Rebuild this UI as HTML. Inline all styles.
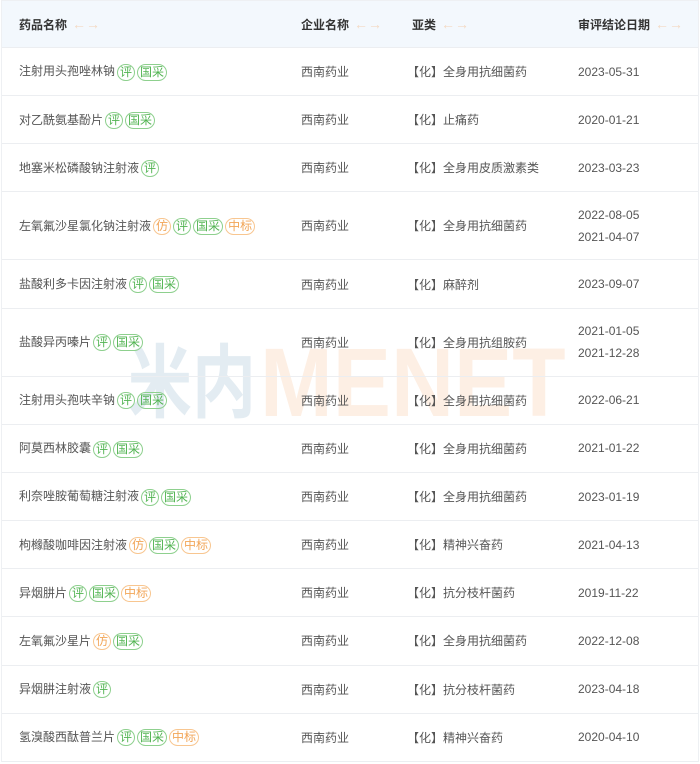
<!DOCTYPE html>
<html><head><meta charset="utf-8"><style>
*{margin:0;padding:0;box-sizing:border-box}
body{width:700px;height:764px;background:#fff;font-family:"Liberation Sans","Noto Sans CJK SC",sans-serif;font-size:12px;color:#555;position:relative;overflow:hidden}
.wrap{position:absolute;left:1px;top:0;width:698px;border:1px solid #eef0f3;border-bottom:none;z-index:1}
.row{display:flex;align-items:center;border-bottom:1px solid #eceef1;height:48.17px;position:relative}
.row.h2{height:68px}
.hd{background:#f3f8fd;height:47px;font-weight:bold;color:#333}
.c1{position:absolute;left:17px}
.c2{position:absolute;left:299px}
.c3{position:absolute;left:405px}
.c4{position:absolute;left:576px;line-height:22px}
.ar{color:#f3dac4;font-weight:normal;margin-left:5px;font-size:14px}
.t{display:inline-block;border:1px solid #8ed08e;color:#52b452;border-radius:9px;font-size:12px;line-height:15px;padding:0 2px;margin-left:2px;vertical-align:middle}
.t.o{border-color:#f8c690;color:#f2a658}
.wm{position:absolute;font-weight:bold;font-family:"Liberation Sans","Noto Sans CJK SC",sans-serif;transform-origin:0 0;z-index:0}
</style></head><body>
<div class="wm" style="left:128px;top:338px;font-size:80px;line-height:92px;color:#e3ecf2;transform:scaleX(0.8)">米内</div>
<div class="wm" style="left:260px;top:333px;font-size:97px;line-height:100px;color:#fdefe4;transform:scaleX(0.9)">MENET</div>
<div class="wrap">
<div class="row hd"><span class="c1">药品名称<span class="ar">←→</span></span><span class="c2">企业名称<span class="ar">←→</span></span><span class="c3" style="left:410px">亚类<span class="ar">←→</span></span><span class="c4">审评结论日期<span class="ar">←→</span></span></div>
<div class="row"><span class="c1">注射用头孢唑林钠<span class="t">评</span><span class="t">国采</span></span><span class="c2">西南药业</span><span class="c3">【化】全身用抗细菌药</span><span class="c4">2023-05-31</span></div>
<div class="row"><span class="c1">对乙酰氨基酚片<span class="t">评</span><span class="t">国采</span></span><span class="c2">西南药业</span><span class="c3">【化】止痛药</span><span class="c4">2020-01-21</span></div>
<div class="row"><span class="c1">地塞米松磷酸钠注射液<span class="t">评</span></span><span class="c2">西南药业</span><span class="c3">【化】全身用皮质激素类</span><span class="c4">2023-03-23</span></div>
<div class="row h2"><span class="c1">左氧氟沙星氯化钠注射液<span class="t o">仿</span><span class="t">评</span><span class="t">国采</span><span class="t o">中标</span></span><span class="c2">西南药业</span><span class="c3">【化】全身用抗细菌药</span><span class="c4">2022-08-05<br>2021-04-07</span></div>
<div class="row"><span class="c1">盐酸利多卡因注射液<span class="t">评</span><span class="t">国采</span></span><span class="c2">西南药业</span><span class="c3">【化】麻醉剂</span><span class="c4">2023-09-07</span></div>
<div class="row h2"><span class="c1">盐酸异丙嗪片<span class="t">评</span><span class="t">国采</span></span><span class="c2">西南药业</span><span class="c3">【化】全身用抗组胺药</span><span class="c4">2021-01-05<br>2021-12-28</span></div>
<div class="row"><span class="c1">注射用头孢呋辛钠<span class="t">评</span><span class="t">国采</span></span><span class="c2">西南药业</span><span class="c3">【化】全身用抗细菌药</span><span class="c4">2022-06-21</span></div>
<div class="row"><span class="c1">阿莫西林胶囊<span class="t">评</span><span class="t">国采</span></span><span class="c2">西南药业</span><span class="c3">【化】全身用抗细菌药</span><span class="c4">2021-01-22</span></div>
<div class="row"><span class="c1">利奈唑胺葡萄糖注射液<span class="t">评</span><span class="t">国采</span></span><span class="c2">西南药业</span><span class="c3">【化】全身用抗细菌药</span><span class="c4">2023-01-19</span></div>
<div class="row"><span class="c1">枸橼酸咖啡因注射液<span class="t o">仿</span><span class="t">国采</span><span class="t o">中标</span></span><span class="c2">西南药业</span><span class="c3">【化】精神兴奋药</span><span class="c4">2021-04-13</span></div>
<div class="row"><span class="c1">异烟肼片<span class="t">评</span><span class="t">国采</span><span class="t o">中标</span></span><span class="c2">西南药业</span><span class="c3">【化】抗分枝杆菌药</span><span class="c4">2019-11-22</span></div>
<div class="row"><span class="c1">左氧氟沙星片<span class="t o">仿</span><span class="t">国采</span></span><span class="c2">西南药业</span><span class="c3">【化】全身用抗细菌药</span><span class="c4">2022-12-08</span></div>
<div class="row"><span class="c1">异烟肼注射液<span class="t">评</span></span><span class="c2">西南药业</span><span class="c3">【化】抗分枝杆菌药</span><span class="c4">2023-04-18</span></div>
<div class="row"><span class="c1">氢溴酸西酞普兰片<span class="t">评</span><span class="t">国采</span><span class="t o">中标</span></span><span class="c2">西南药业</span><span class="c3">【化】精神兴奋药</span><span class="c4">2020-04-10</span></div>
</div>
</body></html>
